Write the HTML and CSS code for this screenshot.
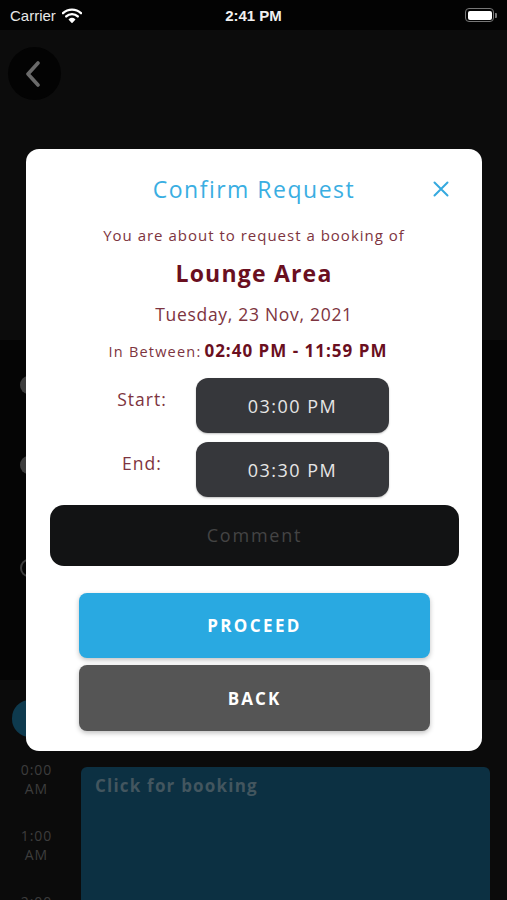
FILE: index.html
```html
<!DOCTYPE html>
<html>
<head>
<meta charset="utf-8">
<link rel="stylesheet" href="styles.css">
</head>
<body>
<div class="screen">
  <div class="statusbar">
    <div class="sb-left">
      <span class="carrier">Carrier</span>
      <svg class="wifi" width="20" height="15" viewBox="0 0 20 15">
        <path d="M1 5.2 A13 13 0 0 1 19 5.2" fill="none" stroke="#fff" stroke-width="2.4" stroke-linecap="round"/>
        <path d="M4.2 8.4 A8.4 8.4 0 0 1 15.8 8.4" fill="none" stroke="#fff" stroke-width="2.4" stroke-linecap="round"/>
        <path d="M7.4 11.5 A4 4 0 0 1 12.6 11.5 L10 14.2 Z" fill="#fff" stroke="#fff" stroke-width="1.4" stroke-linejoin="round"/>
      </svg>
    </div>
    <div class="sb-time">2:41 PM</div>
    <div class="sb-right">
      <div class="battery"><div class="battery-fill"></div></div>
      <div class="battery-nub"></div>
    </div>
  </div>

  <div class="header">
    <div class="back-circle">
      <svg width="16" height="26" viewBox="0 0 16 26"><path d="M13 2 L3 13 L13 24" fill="none" stroke="#6a6a6a" stroke-width="3.6" stroke-linecap="round" stroke-linejoin="round"/></svg>
    </div>
  </div>

  <div class="list">
    <div class="list-row r1"><span class="dot"></span></div>
    <div class="list-row r2"><span class="dot"></span></div>
    <div class="list-row r3"><span class="dot ring"></span></div>
  </div>

  <div class="schedule">
    <div class="tabs"><span class="tab-pill"></span></div>
    <div class="timeline">
      <div class="hours">
        <div class="hour"><span class="hl">0:00</span><span class="hl">AM</span></div>
        <div class="hour"><span class="hl">1:00</span><span class="hl">AM</span></div>
        <div class="hour"><span class="hl">2:00</span></div>
      </div>
      <div class="slot">Click for booking</div>
    </div>
  </div>

  <div class="modal">
    <div class="modal-head">
      <span></span>
      <h2 class="modal-title">Confirm Request</h2>
      <span class="close">
        <svg width="16" height="16" viewBox="0 0 16 16"><path d="M1.5 1.5 L14.5 14.5 M14.5 1.5 L1.5 14.5" stroke="#35a9df" stroke-width="2" stroke-linecap="round"/></svg>
      </span>
    </div>
    <p class="intro">You are about to request a booking of</p>
    <p class="place">Lounge Area</p>
    <p class="date">Tuesday, 23 Nov, 2021</p>
    <p class="between"><span class="between-label">In Between:</span><span class="between-val">02:40 PM - 11:59 PM</span></p>
    <div class="time-row start">
      <span class="time-label">Start:</span>
      <div class="time-box">03:00 PM</div>
    </div>
    <div class="time-row end">
      <span class="time-label">End:</span>
      <div class="time-box">03:30 PM</div>
    </div>
    <div class="comment">Comment</div>
    <button class="btn proceed">PROCEED</button>
    <button class="btn back">BACK</button>
  </div>
</div>
</body>
</html>
```

FILE: styles.css
```css
* { box-sizing: border-box; }
html, body { margin: 0; padding: 0; background: #0b0b0b; }
body { font-family: "Open Sans", "Noto Sans", sans-serif; }
.screen { position: relative; width: 507px; height: 900px; overflow: hidden; background: #0b0b0b; }

.statusbar { height: 30px; background: #030303; display: flex; align-items: center; justify-content: space-between; padding: 0 10px; color: #fff; position: relative; }
.sb-left { display: flex; align-items: center; gap: 6px; }
.carrier { font-family: "Liberation Sans", Arial, sans-serif; font-size: 15px; color: #e8e8e8; }
.sb-time { position: absolute; left: 0; right: 0; text-align: center; font-family: "Liberation Sans", Arial, sans-serif; font-weight: bold; font-size: 15px; color: #f0f0f0; pointer-events: none; }
.sb-right { display: flex; align-items: center; gap: 1px; }
.battery { width: 29px; height: 14px; border: 1.5px solid #777; border-radius: 4px; padding: 1.5px; }
.battery-fill { width: 100%; height: 100%; background: #fff; border-radius: 2px; }
.battery-nub { width: 2px; height: 5px; background: #777; border-radius: 0 1px 1px 0; }

.header { height: 310px; background: #0c0c0c; padding: 17px 0 0 8px; }
.back-circle { width: 53px; height: 53px; border-radius: 50%; background: #030303; display: flex; align-items: center; justify-content: center; padding-right: 4px; }

.list { background: #050505; height: 340px; display: flex; flex-direction: column; }
.list-row { padding-left: 20px; display: flex; align-items: center; }
.list-row.r1 { height: 90px; }
.list-row.r2 { height: 70px; }
.list-row.r3 { height: 136px; }
.dot { width: 16px; height: 18px; border-radius: 50%; background: #3c3c3c; }
.dot.ring { background: transparent; border: 2px solid #3c3c3c; }

.schedule { background: #0b0b0b; padding-top: 20px; }
.tabs { height: 60px; padding-left: 12px; }
.tab-pill { display: block; width: 60px; height: 37px; border-radius: 18px; background: #0e3a4e; }
.timeline { display: flex; }
.hours { width: 81px; display: flex; flex-direction: column; padding-top: 0; }
.hour { height: 66px; display: flex; flex-direction: column; align-items: center; padding-right: 8px; }
.hl { display: block; font-size: 14px; line-height: 19px; height: 19px; letter-spacing: 1px; color: #3d3d3d; }
.slot { width: 409px; height: 200px; margin-top: 7px; background: #0c3042; border-radius: 6px; padding: 7px 14px; color: #43565f; font-weight: 700; font-size: 17px; letter-spacing: 1.2px; }

.modal { position: absolute; left: 26px; top: 149px; width: 456px; height: 602px; background: #fff; border-radius: 13px; padding: 25px 0 20px; display: flex; flex-direction: column; color: #7a2a36; }
.modal-head { display: grid; grid-template-columns: 1fr auto 1fr; align-items: center; height: 30px; }
.modal-title { margin: 0; font-weight: 400; font-size: 23px; line-height: 30px; color: #3aaee2; text-align: center; letter-spacing: 1.5px; white-space: nowrap; }
.close { justify-self: end; margin-right: 33px; display: flex; }
.intro { margin: 21px 0 0; text-align: center; font-size: 15px; line-height: 20px; letter-spacing: 1px; color: #7d3440; }
.place { margin: 13px 0 0; text-align: center; font-size: 23px; line-height: 30px; font-weight: 700; color: #6a0f1f; letter-spacing: 1.2px; }
.date { margin: 14px 0 0; text-align: center; font-size: 17.5px; line-height: 24px; letter-spacing: 0.7px; color: #7d3440; }
.between { margin: 14px 0 0; line-height: 22px; display: flex; justify-content: center; align-items: baseline; gap: 3px; padding-right: 12px; }
.between-label { font-size: 14.5px; letter-spacing: 1.2px; color: #7d3440; }
.between-val { font-size: 17px; font-weight: 700; letter-spacing: 1px; color: #6a0f1f; }
.time-row { display: grid; grid-template-columns: 80px 193px; column-gap: 14px; padding-left: 76px; }
.time-row.start { margin-top: 15px; }
.time-row.end { margin-top: 9px; }
.time-label { text-align: center; font-size: 17.5px; line-height: 24px; letter-spacing: 1px; padding-top: 9px; color: #7d3440; }
.time-box { height: 55px; background: #36373b; border-radius: 12px; display: flex; align-items: center; justify-content: center; color: #e6e6e6; font-size: 18px; letter-spacing: 1.5px; box-shadow: 0 1px 2px rgba(0,0,0,0.25); }
.comment { margin: 8px 23px 0 24px; height: 61px; background: #121314; border-radius: 14px; display: flex; align-items: center; justify-content: center; color: #444; font-size: 18px; letter-spacing: 1.8px; }
.btn { display: block; margin: 0 52px 0 53px; height: 66px; border: none; border-radius: 8px; color: #fff; font-family: "Open Sans", sans-serif; font-weight: 700; font-size: 17px; letter-spacing: 2.4px; box-shadow: 0 2px 5px rgba(0,0,0,0.25); }
.btn.proceed { margin-top: 27px; background: #29a9e1; }
.btn.back { margin-top: 7px; background: #555555; letter-spacing: 2.1px; }
```
